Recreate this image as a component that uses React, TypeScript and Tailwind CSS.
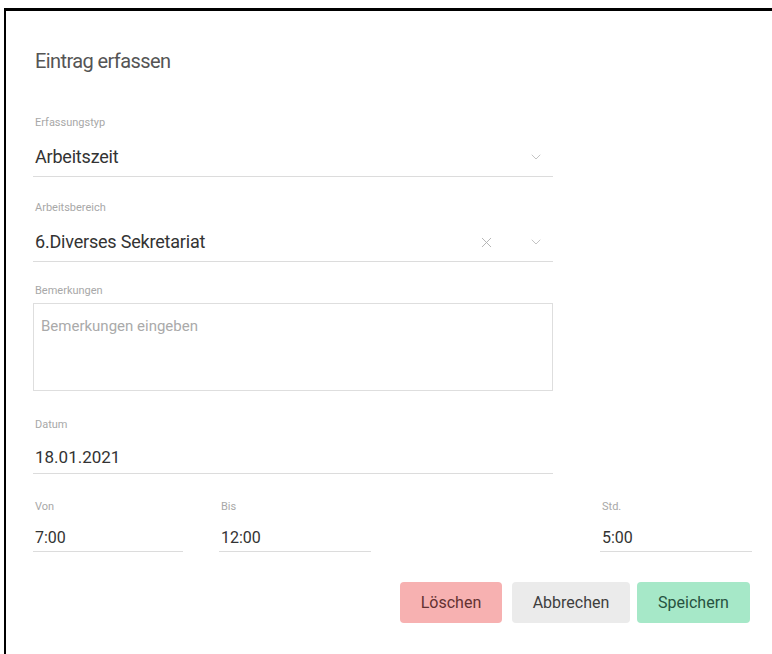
import { ChevronDown, X } from "lucide-react";

function Label({ children }: { children: React.ReactNode }) {
  return <div className="pl-[2px] text-[11px] leading-[12px] text-[#a8a8a8]">{children}</div>;
}

function SelectField({
  label,
  value,
  clearable,
}: {
  label: string;
  value: string;
  clearable?: boolean;
}) {
  return (
    <div className="w-[520px]">
      <Label>{label}</Label>
      <div className="mt-[18px] flex items-center border-b border-[#dcdcdc] pb-[9px] pl-[2px]">
        <span className="flex-1 text-[18px] leading-[20px] tracking-[-0.2px] text-[#333]">{value}</span>
        {clearable && <X className="mr-[32px] h-[17px] w-[17px] text-[#b0b0b0]" strokeWidth={1.3} />}
        <ChevronDown className="mr-[8px] h-[16px] w-[18px] text-[#c0c0c0]" strokeWidth={1.4} />
      </div>
    </div>
  );
}

function TimeField({ label, value, width }: { label: string; value: string; width: string }) {
  return (
    <div className={width}>
      <Label>{label}</Label>
      <div className="mt-[16px] border-b border-[#dcdcdc] pb-[4px] pl-[2px] text-[16px] leading-[18px] text-[#333]">
        {value}
      </div>
    </div>
  );
}

export default function App() {
  return (
    <div className="h-[654px] w-[772px] overflow-hidden bg-white pt-[8px] pl-[4px] font-['Roboto',sans-serif]">
      <div className="h-full border-l-2 border-t-[3px] border-black bg-white">
        <div className="pl-[27px] pt-[38px]">
          <h1 className="pl-[2px] text-[20px] leading-[24px] tracking-[-0.6px] text-[#555]">
            Eintrag erfassen
          </h1>

          <div className="mt-[44px] flex flex-col gap-[25px]">
            <SelectField label="Erfassungstyp" value="Arbeitszeit" />
            <SelectField label="Arbeitsbereich" value="6.Diverses Sekretariat" clearable />
          </div>

          <div className="mt-[23px] w-[520px]">
            <Label>Bemerkungen</Label>
            <div className="mt-[6px] h-[88px] border border-[#dedede] px-[7px] pt-[13px] text-[15px] leading-[18px] text-[#aaa]">
              Bemerkungen eingeben
            </div>
          </div>

          <div className="mt-[28px] w-[520px]">
            <Label>Datum</Label>
            <div className="mt-[16px] border-b border-[#dcdcdc] pb-[6px] pl-[2px] text-[17px] leading-[20px] text-[#333]">
              18.01.2021
            </div>
          </div>

          <div className="mt-[27px] flex w-[719px]">
            <TimeField label="Von" value="7:00" width="w-[150px]" />
            <div className="w-[36px]" />
            <TimeField label="Bis" value="12:00" width="w-[152px]" />
            <div className="flex-1" />
            <TimeField label="Std." value="5:00" width="w-[152px]" />
          </div>

          <div className="mt-[30px] flex w-[717px] justify-end text-[16px]">
            <button className="mr-[10px] h-[41px] w-[102px] rounded-[4px] bg-[#f7b1b1] text-[#633232]">
              Löschen
            </button>
            <button className="mr-[7px] h-[41px] w-[118px] rounded-[4px] bg-[#ebebeb] text-[#3e3e3e]">
              Abbrechen
            </button>
            <button className="h-[41px] w-[113px] rounded-[4px] bg-[#a6e8c8] text-[#275240]">
              Speichern
            </button>
          </div>
        </div>
      </div>
    </div>
  );
}
